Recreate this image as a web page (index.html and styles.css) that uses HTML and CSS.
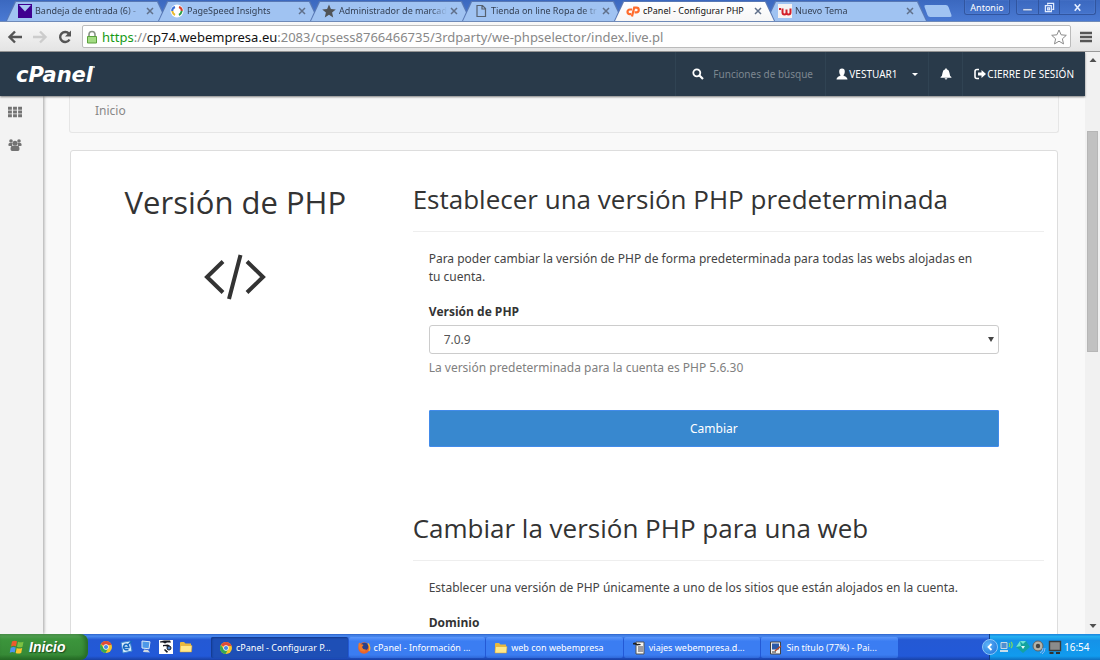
FILE: index.html
```html
<!DOCTYPE html>
<html lang="es">
<head>
    <meta charset="UTF-8">
    <meta name="viewport" content="width=device-width, initial-scale=1.0">
    <title>cPanel - Configurar PHP</title>
    <link rel="stylesheet" href="styles.css">
</head>
<body>
    <svg class="sprites" aria-hidden="true">
        <symbol id="close" viewBox="0 0 8 8"><path d="M1 1l6 6M7 1L1 7" stroke="currentColor" stroke-width="1.5"/></symbol>
        <symbol id="chrome" viewBox="0 0 14 14">
            <circle cx="7" cy="7" r="6" fill="#f6c52c"/>
            <path d="M7 7L1.8 4A6 6 0 0 1 12.6 5H7z" fill="#dd4c38"/>
            <path d="M1.8 4A6 6 0 0 0 6.5 13L9 8.500L7 7L4.500 8z" fill="#35a853"/>
            <circle cx="7" cy="7" r="2.700" fill="#fff"/>
            <circle cx="7" cy="7" r="2.100" fill="#4487e8"/>
        </symbol>
        <symbol id="folder" viewBox="0 0 14 14">
            <path d="M1 3q0-1 1-1h3l1.500 1.500H12v8H1z" fill="#e9b93c"/>
            <path d="M1.500 5.500H13L12.500 12H1z" fill="#ffe88a" stroke="#d79e2a" stroke-width=".5"/>
        </symbol>
    </svg>

    <div class="tab-strip">
        <div class="tabs">
            <div class="tab">
                <svg class="tab-icon" viewBox="0 0 14 14"><path d="M0 0h14v14H0z" fill="#400090"/><path d="M1 1h12L7 7.500z" fill="#a9c9f3"/></svg>
                <span class="tab-title">Bandeja de entrada (6) -</span>
                <button class="tab-close" aria-label="Cerrar"><svg><use href="#close"/></svg></button>
            </div>
            <div class="tab">
                <svg class="tab-icon" viewBox="0 0 14 14"><circle cx="7" cy="7" r="6.500" fill="#fff"/><g fill="none" stroke-width="2"><path d="M5 3Q2 4 2.200 7" stroke="#3a6fd8"/><path d="M2.200 7Q3 10 5 11" stroke="#e8b92c"/><path d="M9 3Q12 4 11.800 7" stroke="#d8402c"/><path d="M11.800 7Q11 10 9 11" stroke="#2f9e48"/></g></svg>
                <span class="tab-title">PageSpeed Insights</span>
                <button class="tab-close" aria-label="Cerrar"><svg><use href="#close"/></svg></button>
            </div>
            <div class="tab">
                <svg class="tab-icon" viewBox="0 0 14 14"><path d="M7 .5l1.900 4.500 4.900.4-3.700 3.200 1.100 4.800L7 10.800l-4.200 2.600 1.100-4.800L.2 5.400 5.100 5z" fill="#505356"/></svg>
                <span class="tab-title">Administrador de marcad</span>
                <button class="tab-close" aria-label="Cerrar"><svg><use href="#close"/></svg></button>
            </div>
            <div class="tab">
                <svg class="tab-icon" viewBox="0 0 14 14"><path d="M3 1.500h5.500l3 3v8H3zM8 1.500V5h3.500" fill="none" stroke="#56616f" stroke-width="1.200"/></svg>
                <span class="tab-title">Tienda on line Ropa de tr</span>
                <button class="tab-close" aria-label="Cerrar"><svg><use href="#close"/></svg></button>
            </div>
            <div class="tab active">
                <svg class="tab-icon" viewBox="0 0 14 14"><g fill="none" stroke="#ff6c2c" stroke-width="2.200"><path d="M6 5.500H3.800a2.300 2.300 0 0 0 0 4.600h1.400M6 12.500L8.200 3.600h2.200a2.200 2.200 0 0 1 0 4.700H8.600"/></g></svg>
                <span class="tab-title">cPanel - Configurar PHP</span>
                <button class="tab-close" aria-label="Cerrar"><svg><use href="#close"/></svg></button>
            </div>
            <div class="tab">
                <svg class="tab-icon" viewBox="0 0 14 14"><path d="M0 0h14v14H0z" fill="#f6f2f2"/><path d="M4.500 4.500v4q0 2 2 2T8.500 8.500V5.500v3q0 2 2 2t2-2v-4" fill="none" stroke="#d4202a" stroke-width="2"/><path d="M1 4h2v2H1z" fill="#d4202a"/></svg>
                <span class="tab-title">Nuevo Tema</span>
                <button class="tab-close" aria-label="Cerrar"><svg><use href="#close"/></svg></button>
            </div>
        </div>
        <button class="new-tab" aria-label="Nueva pestaña"></button>
        <div class="window-controls">
            <button class="profile">Antonio</button>
            <div class="window-buttons">
                <button aria-label="Minimizar"><svg viewBox="0 0 12 12"><path d="M1 7.500h10v2H1z" fill="#eef4ff" stroke="#31549c" stroke-width=".5"/></svg></button>
                <button aria-label="Restaurar"><svg viewBox="0 0 12 12"><g fill="none" stroke="#e4edff" stroke-width="1.300"><path d="M4 3V1.500h6.500V8H9M1.500 4H8v6.500H1.500z"/><path d="M4 6.500h2v2H4z"/></g></svg></button>
                <button class="wide" aria-label="Cerrar"><svg viewBox="0 0 12 12"><path d="M3 2.500l6 7M9 2.500l-6 7" stroke="#e4edff" stroke-width="1.800"/></svg></button>
            </div>
        </div>
    </div>

    <div class="toolbar">
        <button class="tool" aria-label="Atrás"><svg viewBox="0 0 16 16"><path d="M15 8H3M8 2.500L2.500 8 8 13.500" fill="none" stroke="#555" stroke-width="2.400"/></svg></button>
        <button class="tool" aria-label="Adelante"><svg viewBox="0 0 16 16"><path d="M1 8h12M8 2.500L13.500 8 8 13.500" fill="none" stroke="#ccc" stroke-width="2.400"/></svg></button>
        <button class="tool" aria-label="Recargar"><svg viewBox="0 0 16 16"><path d="M12.500 10.500A5 5 0 1 1 12 4.800" fill="none" stroke="#555" stroke-width="2.400"/><path d="M14 1.500v6H8z" fill="#555"/></svg></button>
        <div class="address">
            <svg class="lock" viewBox="0 0 12 14"><path d="M3 7V4.500a3 3 0 0 1 6 0V7" fill="none" stroke="#8a9488" stroke-width="1.600"/><path d="M1.500 6.500h9v6.500h-9z" fill="#a3dc83" stroke="#5ba13c"/></svg>
            <span class="url"><span class="scheme">https</span>://<span class="host">cp74.webempresa.eu</span>:2083/cpsess8766466735/3rdparty/we-phpselector/index.live.pl</span>
            <button class="star" aria-label="Añadir a marcadores"><svg viewBox="0 0 16 16"><path d="M8 1l2.100 4.800 5.200.5-3.900 3.500 1.100 5.100L8 12.200l-4.500 2.700 1.100-5.100L.7 6.300l5.200-.5z" fill="#fff" stroke="#8c8c8c"/></svg></button>
        </div>
        <button class="menu" aria-label="Menú"><svg viewBox="0 0 12 12"><path d="M0 2h12M0 6h12M0 10h12" stroke="#555" stroke-width="2.300"/></svg></button>
    </div>

    <div class="viewport">
        <div class="app">
            <header class="app-header">
                <div class="logo">cPanel<span class="dot"></span></div>
                <div class="header-item search">
                    <svg viewBox="0 0 12 12"><circle cx="4.800" cy="4.800" r="3.500" fill="none" stroke="#fff" stroke-width="1.800"/><path d="M7.500 7.500L11 11" stroke="#fff" stroke-width="2.200"/></svg>
                    <input type="text" aria-label="Buscar" placeholder="Funciones de búsque">
                </div>
                <button class="header-item user">
                    <svg viewBox="0 0 12 12"><path d="M6 .5c2 0 2.800 1.300 2.800 3S8 7 7.300 7.300c.3.800 3.900 1.200 4.200 4.200H.5C.8 8.500 4.400 8.100 4.700 7.300 4 7 3.200 5.200 3.200 3.500S4 .5 6 .5z" fill="#fff"/></svg>
                    <span>VESTUAR1</span>
                    <span class="caret"></span>
                </button>
                <button class="header-item bell" aria-label="Notificaciones">
                    <svg viewBox="0 0 12 12"><path d="M6 .3q.8 0 .8 1 2.500.6 2.700 3.600.2 3 1.900 4.200v.6H.6v-.6Q2.300 8 2.500 4.900 2.700 1.900 5.200 1.300q0-1 .8-1zM4.600 10.300h2.800q-.3 1.300-1.400 1.300t-1.400-1.300z" fill="#fff"/></svg>
                </button>
                <a class="header-item logout" href="#">
                    <svg viewBox="0 0 12 12"><path d="M5 1.500H3q-2 0-2 2v5q0 2 2 2h2" fill="none" stroke="#fff" stroke-width="1.600"/><path d="M4 4.500h3.500V2L12 6l-4.500 4V7.500H4z" fill="#fff"/></svg>
                    <span>CIERRE DE SESIÓN</span>
                </a>
            </header>
            <div class="app-body">
                <nav class="sidebar">
                    <a href="#" aria-label="Aplicaciones"><svg viewBox="0 0 13 11"><path d="M0 2h13M0 5.500h13M0 9h13" stroke="#737373" stroke-width="2.700" stroke-dasharray="3.600 1.100"/></svg></a>
                    <a href="#" aria-label="Usuarios"><svg viewBox="0 0 14 12" fill="#737373"><circle cx="3" cy="2" r="1.800"/><circle cx="11" cy="2" r="1.800"/><path d="M.3 6.500Q.3 3.800 1.500 4h3L4 7H1.500zM13.700 6.500q0-2.700-1.200-2.500h-3l.5 3h2.500z"/><circle cx="7" cy="4.300" r="2.500"/><path d="M2.500 10q0-3.200 2-3.300h5q2 .1 2 3.300 0 2-1.500 2H4q-1.500 0-1.500-2z"/></svg></a>
                </nav>
                <main class="content">
                    <div class="breadcrumb"><a href="#">Inicio</a></div>
                    <div class="panel">
                        <div class="panel-intro">
                            <h1>Versión de PHP</h1>
                            <svg viewBox="0 0 62 46"><path d="M19 7.500L3 23l16 15.500M43 7.500L59 23 43 38.500M36.500 1L25 45" fill="none" stroke="#333" stroke-width="4"/></svg>
                        </div>
                        <div class="panel-main">
                            <section>
                                <h2>Establecer una versión PHP predeterminada</h2>
                                <form class="version-form">
                                    <p>Para poder cambiar la versión de PHP de forma predeterminada para todas las webs alojadas en tu cuenta.</p>
                                    <label for="php-version">Versión de PHP</label>
                                    <div class="select-wrap">
                                        <select id="php-version"><option>7.0.9</option></select>
                                    </div>
                                    <span class="help">La versión predeterminada para la cuenta es PHP 5.6.30</span>
                                    <button type="button" class="btn-primary">Cambiar</button>
                                </form>
                            </section>
                            <section>
                                <h2>Cambiar la versión PHP para una web</h2>
                                <form class="version-form">
                                    <p>Establecer una versión de PHP únicamente a uno de los sitios que están alojados en la cuenta.</p>
                                    <label for="domain">Dominio</label>
                                    <div class="select-wrap">
                                        <select id="domain"></select>
                                    </div>
                                </form>
                            </section>
                        </div>
                    </div>
                </main>
            </div>
        </div>
        <div class="scrollbar">
            <svg viewBox="0 0 8 6"><path d="M4 1l3.500 4h-7z" fill="#505050"/></svg>
            <div class="track">
                <div class="thumb"></div>
            </div>
            <svg viewBox="0 0 8 6"><path d="M4 5L.5 1h7z" fill="#505050"/></svg>
        </div>
    </div>

    <footer class="taskbar">
        <button class="start">
            <svg viewBox="0 0 16 16"><path d="M3 2.500Q5.500 1 8 2.300L7 7.300Q4.500 6 2 7.500z" fill="#ee5a2a"/><path d="M9 2.700q2.500 1.300 5.500 0l-1 5q-3 1.200-5.500 0z" fill="#7cc242"/><path d="M1.700 8.700q2.500-1.500 5-.2l-1 5Q3.200 12.200.7 13.700z" fill="#4a94f0"/><path d="M7.700 8.900q2.500 1.300 5.500 0l-1 5q-3 1.200-5.500 0z" fill="#fbc52c"/></svg>
            <span>Inicio</span>
        </button>
        <div class="quick-launch">
            <svg><use href="#chrome"/></svg>
            <svg viewBox="0 0 14 14"><path d="M2 2.500l9-1.500 2 10-9 2z" fill="#d9ecfc" stroke="#3d86ce"/><path d="M4.500 7.500h5.500Q9.500 4 7 4.200T4.600 7.500Q5 10.500 9.500 9.500M8 5.500L13 1" fill="none" stroke="#1769c0" stroke-width="1.500"/></svg>
            <svg viewBox="0 0 14 14"><path d="M3 1l8 .8-1 7L3 8z" fill="#4c98e8" stroke="#dbe9f7"/><path d="M5 9.500l4 .5 2 2.500-7-.5z" fill="#cfd8e2"/></svg>
            <svg viewBox="0 0 14 14"><path d="M0 0h14v14H0z" fill="#fff"/><path d="M1 1.500l4-1h6l1 2H8L6 3.500 4 2.500H1zM4 5l5-.5 2 1.500-2 1-3-1-2 .5zM6 9l3 2.500-1 1.500-3-3z" fill="#161a22"/><circle cx="10" cy="8" r="2" fill="#4d83c9" stroke="#161a22"/></svg>
            <svg><use href="#folder"/></svg>
        </div>
        <div class="tasks">
            <button class="task current"><svg><use href="#chrome"/></svg><span>cPanel - Configurar P...</span></button>
            <button class="task"><svg viewBox="0 0 14 14"><circle cx="7" cy="7" r="5.800" fill="#e8642c"/><circle cx="7.500" cy="5.500" r="3.800" fill="#27408b"/><path d="M1.500 5Q1 2 2.500 1.500L4 3.500q1.500-.5 2.500.5L5 6q1 3 4 2.500L8 10.500Q2 11 1.500 5z" fill="#f07a2c"/><path d="M11 2.500Q14 6 12 10" fill="none" stroke="#f5b22e" stroke-width="1.300"/></svg><span>cPanel - Información ...</span></button>
            <button class="task"><svg><use href="#folder"/></svg><span>web con webempresa</span></button>
            <button class="task"><svg viewBox="0 0 14 14"><path d="M4 1h8v12H4z" fill="#f4f4f0" stroke="#555"/><path d="M6 6h5M6 8h5M6 10h5" stroke="#445" stroke-width="1"/><path d="M1 2q3-1.500 4 1 3-1 4 1-3 0-4 .5Q3 3 1 3.500z" fill="#222"/></svg><span>viajes webempresa.d...</span></button>
            <button class="task"><svg viewBox="0 0 14 14"><path d="M1.500 1h10v12h-10z" fill="#f1f1f1" stroke="#444"/><path d="M3 2.500h7v6H3z" fill="#2c5aa8"/><path d="M6 10l6-5" stroke="#b34b2c" stroke-width="1.600"/><path d="M3 11h4" stroke="#333"/></svg><span>Sin título (77%) - Pai...</span></button>
        </div>
        <div class="tray">
            <button class="tray-toggle" aria-label="Mostrar iconos ocultos"><svg viewBox="0 0 14 14"><path d="M8.500 4l-3 3 3 3" fill="none" stroke="#fff" stroke-width="1.800"/></svg></button>
            <svg viewBox="0 0 14 14"><path d="M1 2.500h6v6H1z" fill="#4f8fd0" stroke="#c9d9e6"/><path d="M0 11h8" stroke="#dde5ea" stroke-width="1.800"/><path d="M9 3q1.500 2 0 4M11 2q2.500 3 0 6" fill="none" stroke="#7edb5c" stroke-width="1.200"/></svg>
            <svg viewBox="0 0 14 14"><path d="M4 1h6l4 6-7 6-7-6z" fill="#14a3a0"/><path d="M4 1h6L7 4zM0 7l4-6 1 5z" fill="#6fe3d4"/><path d="M5 6h4L7 9z" fill="#e7fbf8"/></svg>
            <svg viewBox="0 0 14 14"><circle cx="6" cy="6" r="5" fill="#b5b3a8" stroke="#626262"/><circle cx="6" cy="6" r="2.200" fill="#444"/><path d="M11 8q0 4-3 5M13 8q0 4-3 6" fill="none" stroke="#8fb8f0"/></svg>
            <svg viewBox="0 0 14 14"><path d="M1.500 1.500h11v9h-11z" fill="#8b8b8b" stroke="#3c3c3c" stroke-width="1.400"/><path d="M1.500 13h4M8 13h4" stroke="#303030" stroke-width="2"/></svg>
            <time>16:54</time>
        </div>
    </footer>
</body>
</html>
```
FILE: styles.css
```css
* {
    box-sizing: border-box;
}
body {
    display: flex;
    flex-direction: column;
    height: 100vh;
    margin: 0;
    overflow: hidden;
    font-family: "Noto Sans", Arial, sans-serif;
    font-size: 12px;
    line-height: 18px;
    color: #444;
}
button {
    font: inherit;
    color: inherit;
    background: none;
    border: 0;
    padding: 0;
}
a {
    color: inherit;
    text-decoration: none;
}
svg {
    flex: none;
    display: block;
}
.sprites {
    display: none;
}

/* Browser tabs */
.tab-strip {
    position: relative;
    z-index: 0;
    display: flex;
    flex: none;
    height: 22px;
    padding-left: 6px;
    background: linear-gradient(#3b68bf, #4a7ad3);
    border-bottom: 1px solid #6f8ab8;
    font-size: 9px;
}
.tabs {
    display: flex;
    flex: 0 1 912px;
    min-width: 0;
}
.tab {
    position: relative;
    z-index: 0;
    display: flex;
    flex: 1 1 0;
    min-width: 0;
    align-items: center;
    gap: 3px;
    margin-right: -9px;
    padding: 0 13px 0 12px;
    color: #333f52;
}
.tab::before,
.tab::after {
    content: "";
    position: absolute;
    inset: 1px 0 0;
    z-index: -1;
    background: #5878b4;
    clip-path: polygon(9px 0, calc(100% - 9px) 0, 100% 100%, 0 100%);
}
.tab::after {
    inset: 2px 1px 0;
    background: #a0c3f2;
}
.tab.active {
    z-index: 1;
    color: #111;
}
.tab.active::after {
    background: linear-gradient(#fff, #f6f6f6);
}
.tab-icon {
    width: 14px;
    height: 14px;
}
.tab-title {
    flex: 1;
    white-space: nowrap;
    mask-image: linear-gradient(to right, #000 85%, transparent);
}
.tab.active .tab-title {
    mask-image: none;
}
.tab-close {
    color: #60708a;
}
.tab-close svg {
    width: 8px;
    height: 8px;
}
.new-tab {
    width: 24px;
    height: 12px;
    margin: 5px 0 0 8px;
    background: #a0c3f2;
    border-radius: 2px;
    transform: skewX(20deg);
}
.window-controls {
    display: flex;
    gap: 6px;
    margin-left: auto;
    padding-right: 4px;
    height: 15px;
    color: #fff;
}
.profile,
.window-buttons {
    border: 1px solid #31559f;
    border-top: 0;
    border-radius: 0 0 3px 3px;
    box-shadow: inset 0 0 1px #7fa3e8;
}
.profile {
    width: 46px;
    line-height: 15px;
}
.window-buttons {
    display: flex;
}
.window-buttons button {
    display: flex;
    align-items: center;
    justify-content: center;
    width: 21px;
}
.window-buttons button + button {
    border-left: 1px solid #31559f;
}
.window-buttons .wide {
    width: 36px;
}
.window-buttons svg {
    width: 11px;
    height: 11px;
}

/* Address bar */
.toolbar {
    display: flex;
    flex: none;
    align-items: center;
    gap: 9px;
    height: 30px;
    padding: 0 8px 0 7px;
    background: linear-gradient(#f8f8f8, #e4e4e4);
    border-bottom: 1px solid #999;
}
.tool svg {
    width: 16px;
    height: 16px;
}
.address {
    display: flex;
    flex: 1;
    align-items: center;
    gap: 4px;
    min-width: 0;
    height: 23px;
    padding: 0 3px;
    background: #fff;
    border: 1px solid #bbb;
    border-radius: 2px;
}
.lock {
    width: 12px;
    height: 14px;
}
.url {
    flex: 1;
    overflow: hidden;
    white-space: nowrap;
    font-size: 13px;
    color: #888;
}
.scheme {
    color: #159a15;
}
.host {
    color: #111;
}
.star svg {
    width: 16px;
    height: 16px;
}
.menu svg {
    width: 12px;
    height: 12px;
}

/* Page */
.viewport {
    display: flex;
    flex: 1;
    min-height: 0;
}
.app {
    display: flex;
    flex: 1;
    flex-direction: column;
    min-width: 0;
    background: #f9f9f9;
}
.app-header {
    position: relative;
    display: flex;
    flex: none;
    height: 44px;
    background: #293a4a;
    box-shadow: 0 1px 2px rgba(0, 0, 0, 0.5);
    color: #fff;
    font-size: 10px;
}
.logo {
    display: flex;
    flex: 1;
    padding-left: 16px;
    font: italic bold 21px/46px "DejaVu Sans", sans-serif;
}
.dot {
    width: 2px;
    height: 2px;
    margin-top: 14px;
    background: #d5dade;
    border-radius: 50%;
}
.header-item {
    display: flex;
    align-items: center;
    border-left: 1px solid #304353;
}
.header-item svg {
    width: 12px;
    height: 12px;
}
.search {
    gap: 9px;
    width: 150px;
    padding: 0 8px 0 16px;
}
.search input {
    flex: 1;
    min-width: 0;
    padding: 0;
    background: none;
    border: 0;
    font: inherit;
    color: #fff;
}
.search input::placeholder {
    color: #7d8790;
}
.user {
    gap: 1px;
    width: 103px;
    padding: 0 10px;
}
.caret {
    margin-left: auto;
    border: 3px solid transparent;
    border-top-color: #fff;
    border-bottom: 0;
}
.bell {
    justify-content: center;
    width: 34px;
}
.logout {
    gap: 1px;
    padding: 0 11px;
}
.app-body {
    display: flex;
    flex: 1;
    min-height: 0;
}
.sidebar {
    display: flex;
    flex: none;
    flex-direction: column;
    gap: 21px;
    width: 43px;
    padding: 10px 8px;
    background: #f3f3f3;
    box-shadow: 1px 0 3px rgba(0, 0, 0, 0.35);
}
.sidebar svg {
    width: 14px;
    height: 12px;
}
.content {
    flex: 1;
    min-width: 0;
    padding: 0 26px;
    overflow: hidden;
}
.breadcrumb {
    height: 37px;
    padding: 6px 25px;
    background: #f7f7f7;
    border: 1px solid #e6e6e6;
    border-top: 0;
    border-radius: 0 0 3px 3px;
    color: #888;
}
.panel {
    display: flex;
    margin: 17px 1px 0;
    background: #fff;
    border: 1px solid #ddd;
    border-radius: 3px;
}
.panel-intro {
    display: flex;
    flex: none;
    flex-direction: column;
    align-items: center;
    gap: 32px;
    width: calc(100% / 3);
    padding: 31px 13px;
}
.panel-intro svg {
    width: 62px;
    height: 46px;
}
.panel-main {
    flex: 1;
    min-width: 0;
    padding: 31px 13px;
}
h1,
h2 {
    margin: 0;
    color: #333;
    font-family: "Open Sans", Arial, sans-serif;
    font-weight: 400;
}
h1 {
    font-size: 31px;
    line-height: 40px;
}
h2 {
    padding-bottom: 15px;
    border-bottom: 1px solid #eee;
    font-size: 26px;
    line-height: 34px;
}
.version-form {
    display: flex;
    flex-direction: column;
    padding: 18px 45px 64px 16px;
}
.version-form p {
    margin: 0 0 17px;
    padding-right: 16px;
}
.version-form label {
    margin-bottom: 4px;
    color: #333;
    font-family: "Open Sans", Arial, sans-serif;
    font-weight: 700;
}
.select-wrap {
    position: relative;
}
.select-wrap::after {
    content: "";
    position: absolute;
    top: 12px;
    right: 5px;
    border: 3px solid transparent;
    border-top: 5px solid #444;
    border-bottom: 0;
}
.select-wrap select {
    width: 100%;
    height: 29px;
    padding: 0 14px;
    appearance: none;
    background: #fff;
    border: 1px solid #ccc;
    border-radius: 3px;
    font: inherit;
    color: #555;
}
.help {
    margin: 5px 0 33px;
    color: #808080;
}
.btn-primary {
    height: 37px;
    background: #3888cf;
    border: 1px solid #428bea;
    border-radius: 1px;
    color: #fff;
}

/* Scrollbar */
.scrollbar {
    display: flex;
    flex: none;
    flex-direction: column;
    align-items: center;
    width: 15px;
    padding: 5px 2px;
    background: #f1f1f1;
}
.scrollbar svg {
    width: 8px;
    height: 6px;
}
.track {
    display: flex;
    flex: 1;
    flex-direction: column;
    align-self: stretch;
}
.track::before {
    content: "";
    flex: 68;
}
.track::after {
    content: "";
    flex: 272;
}
.thumb {
    flex: 220;
    background: #c1c1c1;
    border: 1px solid #b6b6b6;
}

/* Taskbar */
.taskbar {
    display: flex;
    flex: none;
    height: 26px;
    background: linear-gradient(#2c62c9, #4a8af0 8%, #2459d4 22%, #2259d8 85%, #1941a5);
    color: #fff;
    font-size: 9px;
}
.start {
    display: flex;
    align-items: center;
    gap: 4px;
    width: 88px;
    padding-left: 9px;
    background: linear-gradient(#61a961, #3c953c 20%, #368a36 80%, #246924);
    border-radius: 0 8px 8px 0;
    box-shadow: inset -3px 0 4px #276b27;
    font: italic bold 14px/24px "Liberation Sans", Arial, sans-serif;
    text-shadow: 1px 1px 1px #1e4b1e;
}
.start svg {
    width: 16px;
    height: 16px;
}
.quick-launch {
    display: flex;
    align-items: center;
    gap: 6px;
    width: 123px;
    padding-left: 11px;
}
.quick-launch svg,
.task svg {
    width: 14px;
    height: 14px;
}
.tasks {
    display: flex;
    flex: 0 1 687px;
    gap: 1px;
    min-width: 0;
    padding: 3px 0 2px;
}
.task {
    display: flex;
    flex: 1;
    align-items: center;
    gap: 3px;
    min-width: 0;
    padding-left: 8px;
    background: linear-gradient(#5c97fb, #3b7df2 20%, #3b7df2 85%, #2f68d8);
    border-radius: 2px;
    white-space: nowrap;
    overflow: hidden;
}
.task.current {
    background: #1e4fb6;
    box-shadow: inset 1px 1px 2px #12388a;
}
.tray {
    display: flex;
    align-items: center;
    gap: 2px;
    width: 111px;
    margin-left: auto;
    background: linear-gradient(#1b83dc, #24b0f2 10%, #1592e8 25%, #119bee 85%, #0f70c0);
    border-left: 1px solid #123f86;
}
.tray svg {
    width: 14px;
    height: 14px;
}
.tray-toggle {
    margin-left: -8px;
    background: radial-gradient(circle at 35% 35%, #5fb4f8, #1a6fd8);
    border: 1px solid #8cc6f7;
    border-radius: 50%;
}
.tray time {
    margin-left: auto;
    padding-right: 11px;
    font-size: 10px;
}
```
